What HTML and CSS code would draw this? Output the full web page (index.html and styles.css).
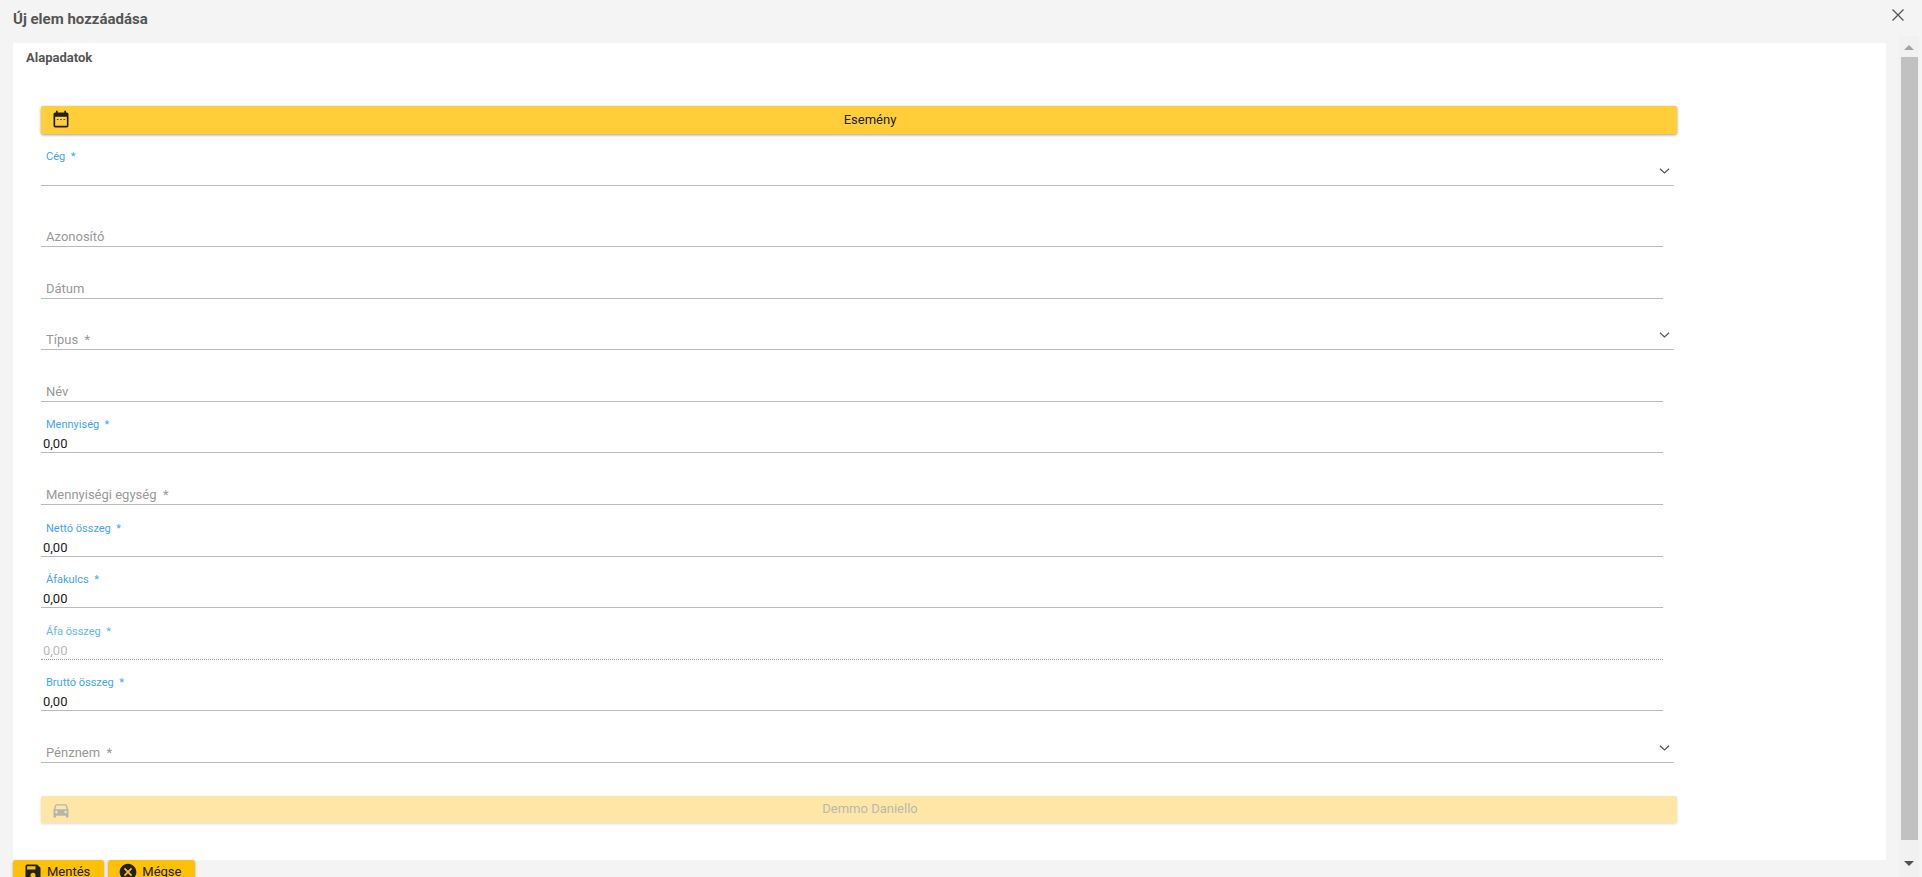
FILE: index.html
```html
<!DOCTYPE html>
<html lang="hu">
<head>
<meta charset="utf-8">
<title>Új elem hozzáadása</title>
<link rel="stylesheet" href="styles.css">
</head>
<body>
<div class="dialog">
  <header class="head">
    <h1 class="title">Új elem hozzáadása</h1>
    <svg class="close" viewBox="0 0 14 14"><path d="M1.5 1.5L12.5 12.5M12.5 1.5L1.5 12.5"/></svg>
  </header>
  <div class="scrollbar">
    <span class="arrow up"></span>
    <span class="thumb"></span>
    <span class="arrow down"></span>
  </div>
  <main class="panel">
    <h2 class="section">Alapadatok</h2>
    <form class="form">
      <div class="bar">
        <svg class="bar-icon" viewBox="0 0 24 24"><path d="M19 3H18V1H16V3H8V1H6V3H5A2 2 0 0 0 3 5V19A2 2 0 0 0 5 21H19A2 2 0 0 0 21 19V5A2 2 0 0 0 19 3M19 19H5V8H19V19Z"/><path d="M7 11h2v1H7zM11 11h2v1h-2zM15 11h2v1h-2z"/></svg>
        <span class="bar-text">Esemény</span>
      </div>
      <div class="field select first"><div class="stack"><label class="float">Cég&nbsp; *</label><span class="value"></span></div><svg class="chev" viewBox="0 0 12 8"><path d="M1 1.5L6 6L11 1.5"/></svg></div>
      <div class="field input tall"><span class="ph">Azonosító</span></div>
      <div class="field input"><span class="ph">Dátum</span></div>
      <div class="field select"><span class="ph">Típus&nbsp; *</span><svg class="chev" viewBox="0 0 12 8"><path d="M1 1.5L6 6L11 1.5"/></svg></div>
      <div class="field input"><span class="ph">Név</span></div>
      <div class="field input"><label class="float">Mennyiség&nbsp; *</label><span class="value">0,00</span></div>
      <div class="field input"><span class="ph">Mennyiségi egység&nbsp; *</span></div>
      <div class="field input"><label class="float">Nettó összeg&nbsp; *</label><span class="value">0,00</span></div>
      <div class="field input"><label class="float">Áfakulcs&nbsp; *</label><span class="value">0,00</span></div>
      <div class="field input off"><label class="float">Áfa összeg&nbsp; *</label><span class="value">0,00</span></div>
      <div class="field input"><label class="float">Bruttó összeg&nbsp; *</label><span class="value">0,00</span></div>
      <div class="field select"><span class="ph">Pénznem&nbsp; *</span><svg class="chev" viewBox="0 0 12 8"><path d="M1 1.5L6 6L11 1.5"/></svg></div>
      <div class="bar disabled">
        <svg class="bar-icon" viewBox="0 0 24 24"><path d="M5 11L6.5 6.5H17.5L19 11M17.5 16A1.5 1.5 0 0 1 16 14.5A1.5 1.5 0 0 1 17.5 13A1.5 1.5 0 0 1 19 14.5A1.5 1.5 0 0 1 17.5 16M6.5 16A1.5 1.5 0 0 1 5 14.5A1.5 1.5 0 0 1 6.5 13A1.5 1.5 0 0 1 8 14.5A1.5 1.5 0 0 1 6.5 16M18.92 6C18.72 5.42 18.16 5 17.5 5H6.5C5.84 5 5.28 5.42 5.08 6L3 12V20A1 1 0 0 0 4 21H5A1 1 0 0 0 6 20V19H18V20A1 1 0 0 0 19 21H20A1 1 0 0 0 21 20V12L18.92 6Z"/></svg>
        <span class="bar-text">Demmo Daniello</span>
      </div>
    </form>
  </main>
  <footer class="foot">
    <button class="btn" type="button"><svg class="btn-icon" viewBox="0 0 24 24"><path d="M15 9H5V5H15M12 19A3 3 0 0 1 9 16A3 3 0 0 1 12 13A3 3 0 0 1 15 16A3 3 0 0 1 12 19M17 3H5C3.89 3 3 3.9 3 5V19A2 2 0 0 0 5 21H19A2 2 0 0 0 21 19V7L17 3Z"/></svg>Mentés</button>
    <button class="btn" type="button"><svg class="btn-icon" viewBox="0 0 24 24"><path d="M12 2C17.53 2 22 6.47 22 12C22 17.53 17.53 22 12 22C6.47 22 2 17.53 2 12C2 6.47 6.47 2 12 2M15.59 7L12 10.59L8.41 7L7 8.41L10.59 12L7 15.59L8.41 17L12 13.41L15.59 17L17 15.59L13.41 12L17 8.41L15.59 7Z"/></svg>Mégse</button>
  </footer>
</div>
</body>
</html>
```

FILE: styles.css
```css
* { box-sizing: border-box; }
html, body { margin: 0; height: 100%; }
body {
  overflow: hidden;
  background: #f4f4f4;
  font-family: Roboto, "Liberation Sans", sans-serif;
  color: #212121;
}
.dialog {
  display: grid;
  width: 1922px;
  height: 877px;
  overflow: hidden;
  grid-template-columns: 1886px 13px 20px 3px;
  grid-template-rows: 36px 7px 817px 17px;
}
.head {
  grid-column: 1 / 5;
  grid-row: 1 / 3;
  display: flex;
  align-items: center;
  justify-content: space-between;
  padding: 0 17px 6px 13px;
}
.title {
  margin: 0;
  font-size: 15px;
  font-weight: 700;
  color: #555;
}
.close {
  width: 14px;
  height: 14px;
  margin-bottom: 7px;
  fill: none;
  stroke: #555;
  stroke-width: 1.3;
}
.scrollbar {
  grid-column: 3;
  grid-row: 2 / 5;
  z-index: 1;
  display: flex;
  flex-direction: column;
  align-items: center;
  background: #f1f1f1;
}
.arrow {
  width: 0;
  height: 0;
  border-left: 5px solid transparent;
  border-right: 5px solid transparent;
}
.arrow.up { margin: 9px 0 7px; border-bottom: 5px solid #a3a3a3; }
.arrow.down { margin: 21px 0 0; border-top: 5px solid #505050; }
.thumb { width: 17px; height: 783px; background: #c1c1c1; }
.panel {
  grid-column: 1;
  grid-row: 3;
  margin-left: 13px;
  padding: 7px 0 0 13px;
  background: #fff;
  border-radius: 2px;
}
.section {
  margin: 0 0 40px;
  font-size: 13px;
  line-height: 16px;
  font-weight: 700;
  color: #555;
}
.form {
  width: 1636px;
  margin-left: 15px;
}
.bar {
  display: flex;
  align-items: center;
  height: 28px;
  padding-left: 10px;
  background: #ffce38;
  border-radius: 2px;
  box-shadow: 0 1px 3px rgba(0, 0, 0, .4);
  font-size: 13px;
}
.bar-icon { width: 20px; height: 20px; flex: none; fill: #212121; }
.bar-text { flex: 1; text-align: center; padding: 0 8px 2px 0; }
.bar.disabled {
  margin-top: 33px;
  height: 27px;
  background: #fee6a6;
  box-shadow: 0 1px 3px rgba(0, 0, 0, .15);
  color: #b9b9b0;
}
.bar.disabled .bar-icon { fill: #b5b5b0; }
.field {
  position: relative;
  display: flex;
  flex-direction: column;
  justify-content: flex-end;
  height: 51.62px;
  padding-left: 5px;
  border-bottom: 1px solid #bbb;
}
.field.input { width: 1622px; }
.field.select { width: 1633px; }
.field.first { height: 52px; }
.field.tall { height: 61px; }
.stack { display: flex; flex-direction: column; }
.float {
  font-size: 11px;
  line-height: 12px;
  margin-bottom: 5px;
  color: #42a5f5;
}
.first .float { margin-bottom: 6px; }
.value {
  height: 16px;
  margin-left: -3px;
  font-size: 13px;
  line-height: 16px;
  color: #212121;
}
.ph {
  font-size: 13px;
  line-height: 16px;
  margin-bottom: 1px;
  color: #999;
}
.off { border-bottom: 1px dotted #999; }
.off .value { color: #bbb; }
.off .float { color: #64b5f6; }
.chev {
  position: absolute;
  right: 4px;
  bottom: 10px;
  width: 11px;
  height: 8px;
  fill: none;
  stroke: #555;
  stroke-width: 1.3;
}
.foot {
  grid-column: 1;
  grid-row: 4;
  display: flex;
  gap: 4px;
  padding-left: 13px;
}
.btn {
  display: flex;
  align-items: flex-start;
  height: 30px;
  padding: 2px 14px 0 10px;
  border: 0;
  border-radius: 3px;
  background: #ffc107;
  box-shadow: 0 1px 3px rgba(0, 0, 0, .3);
  font: 13px/20px Roboto, "Liberation Sans", sans-serif;
  color: #212121;
}
.btn-icon { width: 20px; height: 20px; margin-right: 4px; fill: #212121; }
```
